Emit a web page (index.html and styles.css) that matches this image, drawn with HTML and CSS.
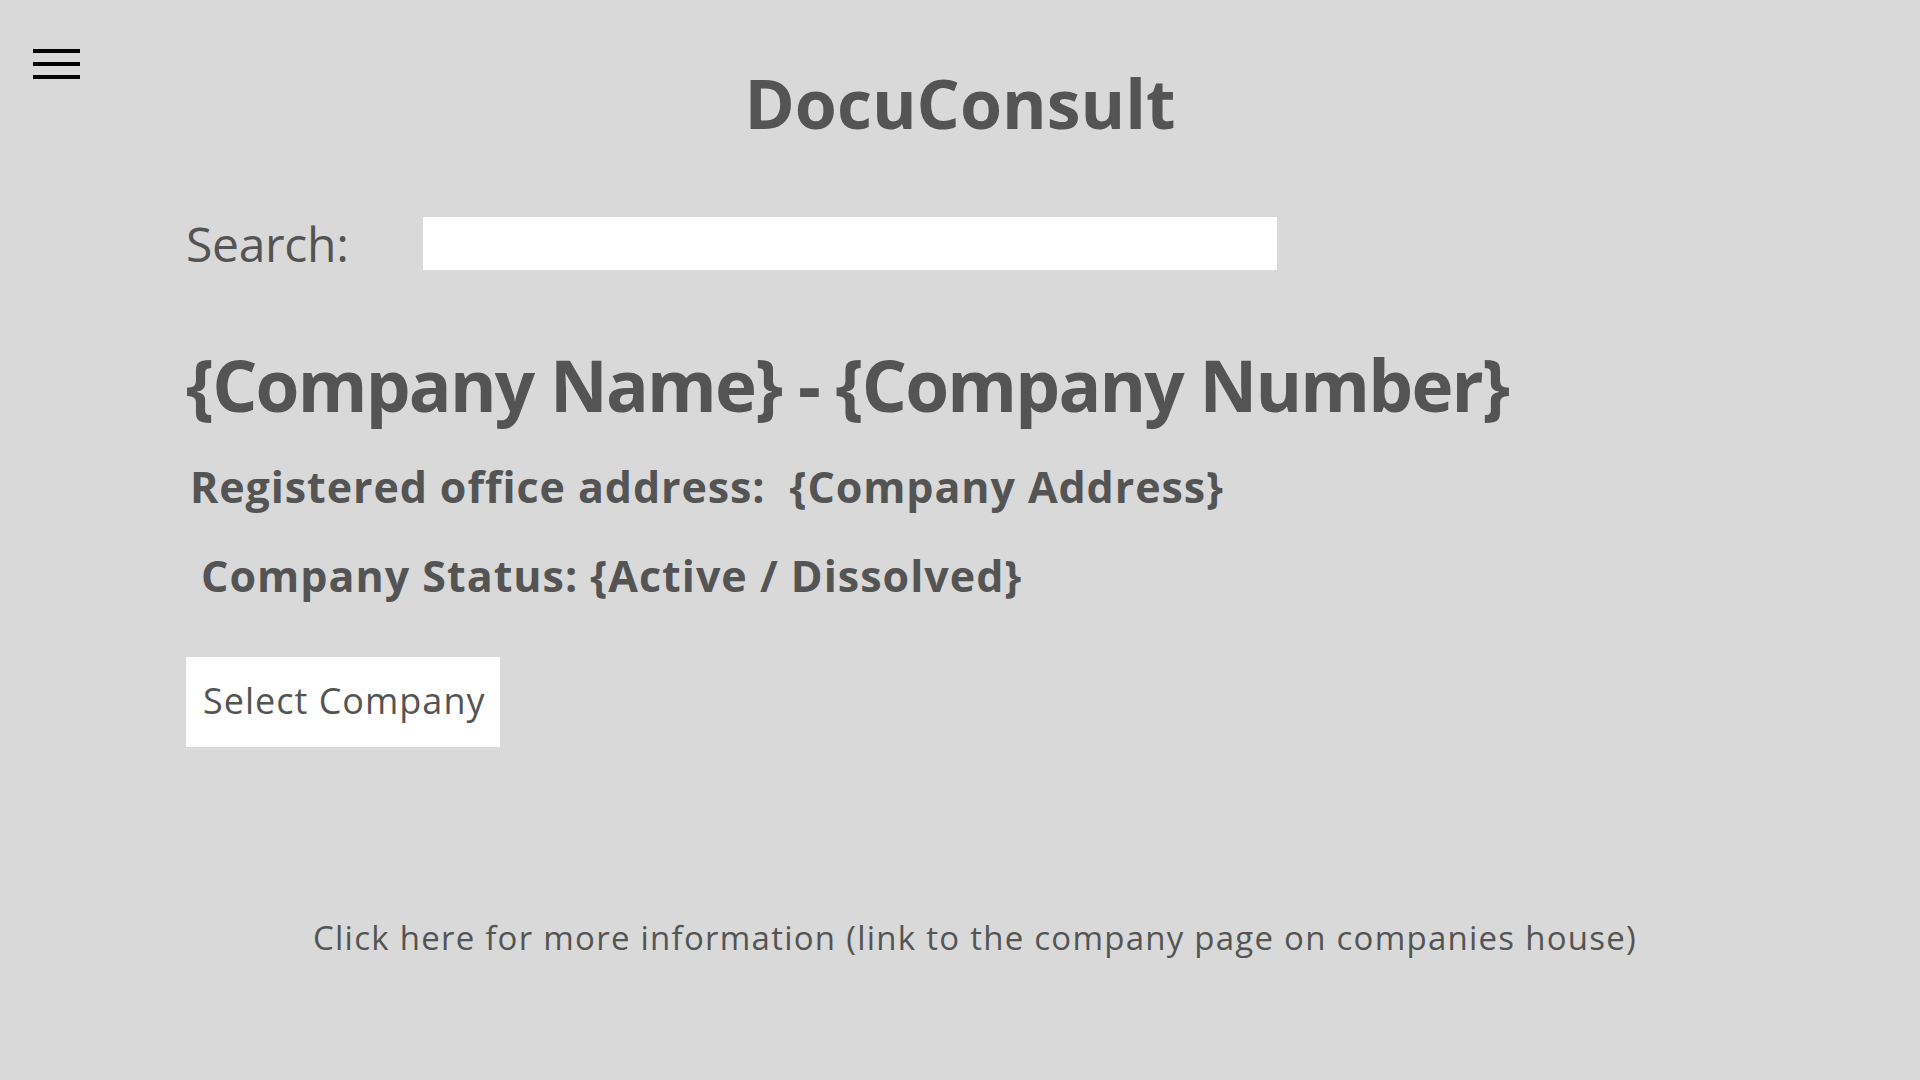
FILE: index.html
```html
<!DOCTYPE html>
<html lang="en">
<head>
<meta charset="utf-8">
<title>DocuConsult</title>
<link rel="stylesheet" href="styles.css">
</head>
<body>
<header class="topbar">
  <button class="menu" aria-label="Menu">
    <span class="menu-line"></span>
    <span class="menu-line"></span>
    <span class="menu-line"></span>
  </button>
  <h1 class="brand">DocuConsult</h1>
  <div class="topbar-spacer"></div>
</header>
<main class="content">
  <div class="search-row">
    <label class="search-label" for="q">Search:</label>
    <input class="search-input" id="q" type="text">
  </div>
  <h2 class="company-title">{Company Name} - {Company Number}</h2>
  <p class="company-address">Registered office address:&nbsp; {Company Address}</p>
  <p class="company-status">Company Status: {Active / Dissolved}</p>
  <button class="select-btn">Select Company</button>
  <p class="more-info">Click here for more information (link to the company page on companies house)</p>
</main>
</body>
</html>
```
FILE: styles.css
```css
html, body {
  margin: 0;
  padding: 0;
}
body {
  background: #d9d9d9;
  color: #545454;
  font-family: "Open Sans", "Noto Sans", sans-serif;
  width: 1920px;
  height: 1080px;
  overflow: hidden;
}
.topbar {
  display: grid;
  grid-template-columns: 1fr auto 1fr;
  align-items: start;
}
.menu {
  justify-self: start;
  margin: 49px 0 0 33px;
  padding: 0;
  border: 0;
  background: none;
  width: 47px;
  height: 30px;
  display: flex;
  flex-direction: column;
  justify-content: space-between;
}
.menu-line {
  display: block;
  width: 47px;
  height: 4px;
  background: #000;
}
.brand {
  margin: 69px 0 0;
  font-size: 68px;
  line-height: 1;
  font-weight: 700;
}
.content {
  padding: 0 0 0 186px;
}
.search-row {
  display: flex;
  align-items: center;
  margin-top: 80px;
  height: 53px;
}
.search-label {
  flex: 0 0 237px;
  font-size: 48px;
  line-height: 1;
  font-weight: 400;
  letter-spacing: -0.3px;
}
.search-input {
  width: 854px;
  height: 53px;
  box-sizing: border-box;
  border: 0;
  background: #fff;
  padding: 0 10px;
  font: inherit;
  font-size: 28px;
}
.company-title {
  margin: 79px 0 0;
  font-size: 71px;
  line-height: 1;
  font-weight: 700;
  letter-spacing: -1.8px;
}
.company-address {
  margin: 45px 0 0;
  padding-left: 4px;
  font-size: 43px;
  line-height: 1;
  font-weight: 700;
  letter-spacing: 0.9px;
}
.company-status {
  margin: 46px 0 0;
  padding-left: 15px;
  font-size: 43px;
  line-height: 1;
  font-weight: 700;
  letter-spacing: 1px;
}
.select-btn {
  display: block;
  margin-top: 60px;
  width: 314px;
  height: 90px;
  border: 0;
  background: #fff;
  color: #545454;
  font-family: inherit;
  font-size: 36px;
  letter-spacing: 1px;
  text-align: left;
  padding: 0 0 4px 17px;
}
.more-info {
  margin: 174px 0 0;
  padding-right: 156px;
  text-align: center;
  font-size: 33px;
  line-height: 1;
  letter-spacing: 1.25px;
}
```
